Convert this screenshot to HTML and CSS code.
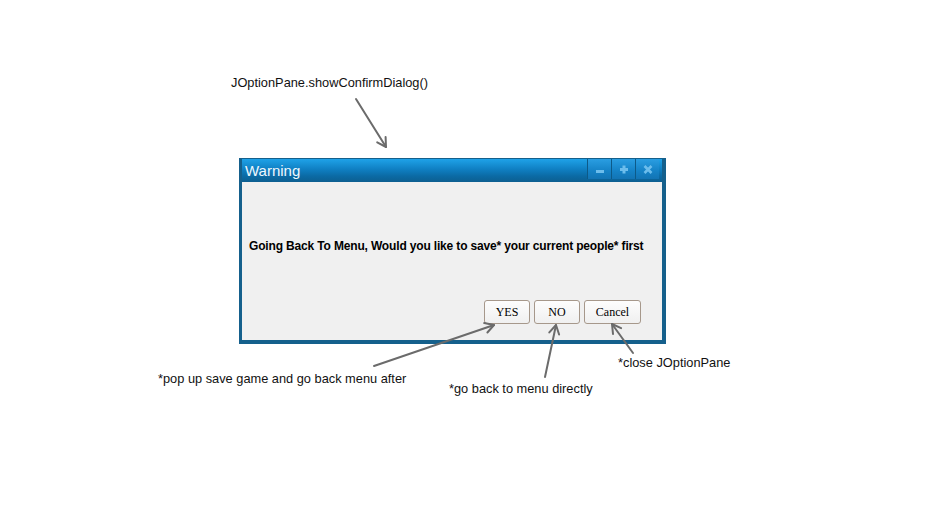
FILE: index.html
```html
<!DOCTYPE html>
<html>
<head>
<meta charset="utf-8">
<link rel="stylesheet" href="styles.css">
</head>
<body>
<div class="canvas">
  <div class="note note-api">JOptionPane.showConfirmDialog()</div>

  <div class="dialog">
    <div class="titlebar">
      <span class="title">Warning</span>
      <div class="winbtns">
        <span class="winbtn">
          <svg width="10" height="10" viewBox="0 0 10 10"><rect x="1" y="5" width="8" height="3" fill="#6cbdec"/></svg>
        </span>
        <span class="winbtn">
          <svg width="10" height="10" viewBox="0 0 10 10"><rect x="1" y="3" width="8" height="3" fill="#6cbdec"/><rect x="3.5" y="0.5" width="3" height="8" fill="#6cbdec"/></svg>
        </span>
        <span class="winbtn">
          <svg width="10" height="10" viewBox="0 0 10 10"><path d="M1.5 1 L8.5 8 M8.5 1 L1.5 8" stroke="#6cbdec" stroke-width="2.6"/></svg>
        </span>
      </div>
    </div>
    <div class="content">
      <p class="message">Going Back To Menu, Would you like to save* your current people* first</p>
      <div class="actions">
        <button class="btn btn-yes">YES</button>
        <button class="btn btn-no">NO</button>
        <button class="btn btn-cancel">Cancel</button>
      </div>
    </div>
  </div>

  <svg class="arrows" width="945" height="519" viewBox="0 0 945 519">
    <g stroke="#6b6b6b" stroke-width="2" fill="none" stroke-linecap="round" stroke-linejoin="round">
      <line x1="356" y1="99" x2="386" y2="147"/>
      <polyline points="385.6,137 386,147 377.2,142.3"/>
      <line x1="374" y1="366" x2="494" y2="325"/>
      <polyline points="484.2,323.1 494,325 487.4,332.5"/>
      <line x1="545" y1="377" x2="556" y2="325"/>
      <polyline points="549.3,332.4 556,325 559.1,334.5"/>
      <line x1="633" y1="353" x2="612" y2="324"/>
      <polyline points="613,334 612,324 621.1,328.1"/>
    </g>
  </svg>

  <div class="note note-yes">*pop up save game and go back menu after</div>
  <div class="note note-no">*go back to menu directly</div>
  <div class="note note-cancel">*close JOptionPane</div>
</div>
</body>
</html>
```

FILE: styles.css
```css
html, body {
  margin: 0;
  padding: 0;
  background: #ffffff;
}

.canvas {
  position: relative;
  width: 945px;
  height: 519px;
  overflow: hidden;
  font-family: "Liberation Sans", Arial, sans-serif;
}

.note {
  position: absolute;
  font-size: 12.8px;
  line-height: 15px;
  color: #111111;
  white-space: nowrap;
}

.note-api { left: 231px; top: 75px; }
.note-yes { left: 158px; top: 371px; }
.note-no { left: 449px; top: 381px; }
.note-cancel { left: 618px; top: 355px; }

.dialog {
  position: absolute;
  left: 239px;
  top: 158px;
  width: 427px;
  box-sizing: border-box;
  padding: 1px 4px 4px 3px;
  background: #15608c;
  display: flex;
  flex-direction: column;
}

.titlebar {
  height: 23px;
  display: flex;
  align-items: flex-start;
  justify-content: space-between;
  padding: 0 3px 0 3px;
  background: linear-gradient(#1fa2e8 0%, #0f7fc2 45%, #0b6aa4 75%, #0d5f90 100%);
}

.title {
  font-size: 15px;
  line-height: 23px;
  color: #eef7fd;
}

.winbtns {
  display: flex;
  height: 20px;
}

.winbtn {
  width: 23px;
  height: 20px;
  border-left: 1px solid #0d5a88;
  background: linear-gradient(#2a9ee2, #1582c6 60%, #1274b4);
  display: flex;
  align-items: center;
  justify-content: center;
}

.winbtn svg { display: block; margin-top: 2px; }

.content {
  height: 158px;
  box-sizing: border-box;
  background: #f0f0f0;
  padding: 57px 21px 16px 7px;
  display: flex;
  flex-direction: column;
}

.message {
  margin: 0;
  font-size: 12px;
  line-height: 14px;
  font-weight: bold;
  letter-spacing: -0.16px;
  color: #000000;
  white-space: nowrap;
}

.actions {
  margin-top: auto;
  display: flex;
  justify-content: flex-end;
  gap: 4px;
}

.btn {
  height: 24px;
  box-sizing: border-box;
  padding: 0;
  border: 1px solid #a6988b;
  border-radius: 3px;
  background: linear-gradient(#fdfdfd, #f0f0f0);
  font-family: "Liberation Serif", "Times New Roman", serif;
  font-size: 12px;
  color: #000000;
}

.btn-yes { width: 46px; }
.btn-no { width: 46px; }
.btn-cancel { width: 57px; }

.arrows {
  position: absolute;
  left: 0;
  top: 0;
  pointer-events: none;
}
```
